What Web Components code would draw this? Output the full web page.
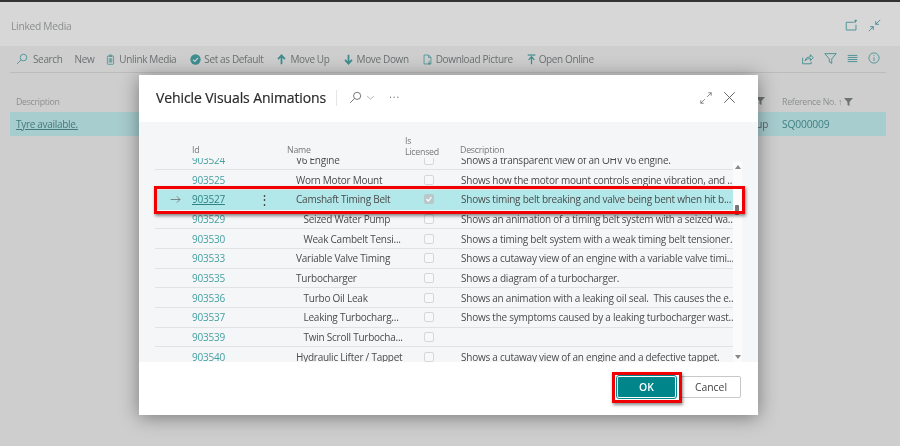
<!DOCTYPE html>
<html lang="en">
<head>
<meta charset="utf-8">
<title>Vehicle Visuals Animations</title>
<style>
  html, body { margin: 0; height: 446px; overflow: hidden; background: #d2d2d2; }
  body { font-family: "Open Sans", "Noto Sans", sans-serif; }
</style>
</head>
<body>
<bc-page>
  <bc-titlebar slot="title" heading="Linked Media"></bc-titlebar>
  <bc-toolbar slot="toolbar"></bc-toolbar>
  <bc-linked-list slot="list"></bc-linked-list>
  <bc-dialog slot="dialog" heading="Vehicle Visuals Animations">
    <bc-animation-table></bc-animation-table>
  </bc-dialog>
</bc-page>

<script>
// Shared stroke icons, 16x16 box
const ICONS = {
  search: '<circle cx="10" cy="6" r="4.4"/><path d="M6.8 9.2 1.5 14.5"/>',
  unlink: '<rect x="3.5" y="3" width="9" height="12" rx="1"/><path d="M6 1.5h4v2H6zM6.2 6v6.5M8 6v6.5M9.8 6v6.5"/>',
  moveup: '<path d="M8 15V3M3 7.5 8 2l5 5.5" stroke-width="2.6"/>',
  movedown: '<path d="M8 1v12M3 8.5 8 14l5-5.5" stroke-width="2.6"/>',
  download: '<path d="M3 1.5h6.5L13 5v9.5H3zM9.5 1.5V5H13"/><path d="M10.5 10v5M8.8 13l1.7 2 1.7-2" stroke-width="1.1"/>',
  open: '<path d="M2.5 1.5h11" stroke-width="1.8"/><path d="M8 15V5M3.8 8.5 8 4l4.2 4.5" stroke-width="1.8"/>',
  share: '<path d="M2 7v7.5h10.5V12"/><path d="M5 11c.5-3.5 3-5 6.5-5V3.2L15 7l-3.500 3.700V8C8.500 8 6.500 9 5 11z"/>',
  filter: '<path d="M1 2h14L9.500 8.500V14l-3-1.800V8.500z"/>',
  list: '<path d="M1 3.500h14M1 6.500h14M1 9.500h14M1 12.500h14" stroke-width="1.300"/>',
  info: '<circle cx="8" cy="8" r="6.800"/><path d="M8 7v5M8 4.200v1.300"/>',
  popout: '<path d="M11 4H1.500v9.500h12V7"/><path d="M12.500 1v3.500M14.500 1.500l-2 2" stroke-width="1.300"/>',
  collapse: '<path d="M15 1 9.500 6.500M9.500 2.500v4h4" stroke-width="1.100"/><path d="M1 15l5.500-5.500M6.500 13.500v-4h-4" stroke-width="1.100"/>',
  expand: '<path d="M9.500 6.500 15 1M11 1h4v4M6.500 9.500 1 15M1 11v4h4" stroke-width="1"/>',
  close: '<path d="M1.500 1.500l13 13M14.500 1.500l-13 13"/>',
  arrow: '<path d="M1 8h13.500M10 3.500 14.500 8 10 12.500"/>',
  chevron: '<path d="M2 5.500 8 11l6-5.500"/>'
};

function icon(name, size, color) {
  return `<svg width="${size}" height="${size}" viewBox="0 0 16 16" fill="none" stroke="${color}" stroke-width="1.100">${ICONS[name]}</svg>`;
}

// Page frame: the dimmed list page with the dialog on top of it
class BcPage extends HTMLElement {
  constructor() {
    super();
    this.attachShadow({ mode: "open" });
    this.shadowRoot.innerHTML = `
    <style>
      :host {
        display: flex;
        flex-direction: column;
        position: relative;
        width: 900px;
        height: 446px;
        background: #cecece;
        border-top: 2px solid #333;
        box-sizing: border-box;
        filter: blur(.3px);
      }
      .dialog { position: absolute; left: 139px; top: 73px; }
    </style>
    <slot name="title"></slot>
    <slot name="toolbar"></slot>
    <slot name="list"></slot>
    <div class="dialog"><slot name="dialog"></slot></div>
    `;
  }
}

class BcTitlebar extends HTMLElement {
  constructor() {
    super();
    this.attachShadow({ mode: "open" });
    this.shadowRoot.innerHTML = `
    <style>
      :host {
        display: flex;
        align-items: center;
        justify-content: space-between;
        height: 44px;
        padding: 3px 19px 0 11px;
        box-sizing: border-box;
        background: #d7d7d7;
        color: #8a8d8e;
        font-size: 10.200px;
        letter-spacing: -.25px;
      }
      .icons { display: flex; gap: 10px; margin-top: -1px; }
    </style>
    <span>${this.getAttribute("heading")}</span>
    <span class="icons">${icon("popout", 13, "#3f8e90")}${icon("collapse", 13, "#3f8e90")}</span>
    `;
  }
}

class BcToolbar extends HTMLElement {
  constructor() {
    super();
    const actions = [
      ["search", "Search", 12, 5, 12],
      [null, "New", 0, 0, 11],
      ["unlink", "Unlink Media", 11, 3, 14],
      ["check", "Set as Default", 11, 3, 13],
      ["moveup", "Move Up", 11, 3, 13],
      ["movedown", "Move Down", 11, 3, 13],
      ["download", "Download Picture", 11, 3, 13],
      ["open", "Open Online", 11, 2, 0]
    ];
    const items = actions.map(([name, label, size, gap, after]) => {
      let glyph = "";
      if (name === "check") {
        glyph = `<svg width="11" height="11" viewBox="0 0 16 16"><circle cx="8" cy="8" r="7.500" fill="#3f8e90"/><path d="M4.500 8.200 7 10.700l4.500-5" fill="none" stroke="#d2d2d2" stroke-width="1.800"/></svg>`;
      } else if (name) {
        glyph = icon(name, size, "#3f8e90");
      }
      return `<span class="item" style="gap:${gap}px;margin-right:${after}px">${glyph}<span>${label}</span></span>`;
    }).join("");
    this.attachShadow({ mode: "open" });
    this.shadowRoot.innerHTML = `
    <style>
      :host {
        display: flex;
        align-items: center;
        justify-content: space-between;
        height: 26px;
        margin: 0 14px 0 10px;
        padding: 0 6px;
        border-bottom: 1px solid #bcbcbc;
        color: #6c7071;
        font-size: 10px;
        letter-spacing: -.36px;
      }
      .left, .right, .item { display: flex; align-items: center; }
      .right { gap: 10px; margin-bottom: 2px; }
      svg { display: block; }
    </style>
    <div class="left">${items}</div>
    <div class="right">${icon("share", 13, "#3f8e90")}${icon("filter", 13, "#3f8e90")}${icon("list", 11, "#3f8e90")}${icon("info", 12, "#3f8e90")}</div>
    `;
  }
}

class BcLinkedList extends HTMLElement {
  constructor() {
    super();
    const funnel = `<svg width="9" height="8" viewBox="0 0 9 8"><path d="M0 0h9L5.500 4v4l-2-1V4z" fill="#6f7374"/></svg>`;
    this.attachShadow({ mode: "open" });
    this.shadowRoot.innerHTML = `
    <style>
      :host {
        display: block;
        margin: 19px 14px 0 10px;
        font-size: 10px;
        letter-spacing: -.3px;
        color: #6c7071;
      }
      .row {
        display: grid;
        grid-template-columns: 1fr 110px 118px;
        align-items: center;
      }
      .head { height: 20px; font-size: 8.800px; color: #8c8f90; }
      .body { height: 24px; background: #a8cdcf; color: #5c6566; }
      .row > :first-child { padding-left: 6px; }
      .end { text-align: right; }
      .head .end { padding-right: 3px; }
      .ref { padding-left: 14px; display: flex; align-items: center; gap: 2px; }
      a { color: #44797c; text-decoration: underline; }
      .num { color: #3f7f82; padding-left: 14px; font-size: 10.300px; letter-spacing: -.2px; }
    </style>
    <div class="row head"><span>Description</span><span class="end">${funnel}</span><span class="ref">Reference No. <span>&#8593;</span> ${funnel}</span></div>
    <div class="row body"><a>Tyre available.</a><span class="end">up</span><span class="num">SQ000009</span></div>
    `;
  }
}

class BcDialog extends HTMLElement {
  constructor() {
    super();
    this.attachShadow({ mode: "open" });
    this.shadowRoot.innerHTML = `
    <style>
      :host {
        display: flex;
        flex-direction: column;
        position: relative;
        width: 619px;
        height: 340px;
        background: #fff;
        box-shadow: 0 2px 18px rgba(0, 0, 0, .42);
        color: #333;
      }
      header {
        display: flex;
        align-items: center;
        height: 47px;
        padding: 0 22px 2px 17px;
        box-sizing: border-box;
      }
      h1 { margin: 0; font-size: 14px; font-weight: 400; letter-spacing: -.1px; color: #2b2b2b; -webkit-text-stroke: .2px #2b2b2b; }
      .sep { width: 1px; height: 16px; background: #e6e6e6; margin: 0 12px 0 10px; }
      .tools { display: flex; align-items: center; flex: 1; color: #777; }
      .dots { margin-left: 14px; letter-spacing: 1px; font-size: 10px; line-height: 10px; margin-top: -8px; }
      .win { display: flex; gap: 11px; align-items: center; }
      .body { flex: 1; background: #f5f6f8; min-height: 0; }
      footer {
        display: flex;
        justify-content: flex-end;
        gap: 5px;
        height: 53px;
        padding: 14px 17px 0 0;
        box-sizing: border-box;
      }
      button {
        width: 60px;
        height: 22px;
        padding: 0;
        font: inherit;
        font-size: 10.400px;
        border-radius: 2px;
      }
      .ok { background: #00858a; border: 1px solid #fff; outline: 1px solid #00858a; color: #fff; font-weight: 600; width: 59px; }
      .cancel { background: #fff; border: 1px solid #c8c8c8; color: #444; }
      /* the red call-out around the OK button, drawn on top of the footer */
      .callout {
        position: absolute;
        left: 473px;
        top: 297px;
        width: 64px;
        height: 25px;
        border: 3px solid #f00000;
        box-shadow: 1px 2px 3px rgba(0, 0, 0, .45);
        pointer-events: none;
      }
    </style>
    <header>
      <h1>${this.getAttribute("heading")}</h1>
      <span class="sep"></span>
      <span class="tools">${icon("search", 13, "#666")}<span style="width:4px"></span>${icon("chevron", 9, "#888")}<span class="dots">...</span></span>
      <span class="win">${icon("expand", 12, "#666")}${icon("close", 13, "#555")}</span>
    </header>
    <div class="body"><slot></slot></div>
    <footer><button class="ok">OK</button><button class="cancel">Cancel</button></footer>
    <div class="callout"></div>
    `;
  }
}

class BcAnimationTable extends HTMLElement {
  constructor() {
    super();
    const data = [
      ["903524", "V6 Engine", 0, "Shows a transparent view of an OHV V6 engine."],
      ["903525", "Worn Motor Mount", 0, "Shows how the motor mount controls engine vibration, and ..."],
      ["903527", "Camshaft Timing Belt", 0, "Shows timing belt breaking and valve being bent when hit b..."],
      ["903529", "Seized Water Pump", 1, "Shows an animation of a timing belt system with a seized wa..."],
      ["903530", "Weak Cambelt Tensi...", 1, "Shows a timing belt system with a weak timing belt tensioner."],
      ["903533", "Variable Valve Timing", 0, "Shows a cutaway view of an engine with a variable valve timi..."],
      ["903535", "Turbocharger", 0, "Shows a diagram of a turbocharger."],
      ["903536", "Turbo Oil Leak", 1, "Shows an animation with a leaking oil seal.&nbsp; This causes the e..."],
      ["903537", "Leaking Turbocharg...", 1, "Shows the symptoms caused by a leaking turbocharger wast..."],
      ["903539", "Twin Scroll Turbocha...", 1, ""],
      ["903540", "Hydraulic Lifter / Tappet", 0, "Shows a cutaway view of an engine and a defective tappet."]
    ];
    const rows = data.map(([id, name, indent, desc]) => {
      const selected = id === "903527";
      return `
      <div class="row${selected ? " selected" : ""}">
        <span class="arrow">${selected ? icon("arrow", 11, "#666") : ""}</span>
        <a>${id}</a>
        <span class="menu">${selected ? "&#8942;" : ""}</span>
        <span></span>
        <span class="${indent ? "indent" : ""}">${name}</span>
        <span class="box">${selected ? '<svg width="8" height="8" viewBox="0 0 8 8"><path d="M1.500 4 3.300 6 6.500 2" fill="none" stroke="#fff" stroke-width="1.200"/></svg>' : ""}</span>
        <span class="desc">${desc}</span>
      </div>`;
    }).join("");
    this.attachShadow({ mode: "open" });
    this.shadowRoot.innerHTML = `
    <style>
      :host {
        display: block;
        position: relative;
        height: 240px;
        font-size: 10px;
        letter-spacing: -.24px;
        color: #4b4b4b;
      }
      .cols, .row {
        display: grid;
        grid-template-columns: 37px 64px 16px 24px 128px 37px 1fr;
        align-items: center;
      }
      .head {
        height: 36px;
        margin-left: 16px;
        width: 578px;
        align-items: end;
        font-size: 8.800px;
        line-height: 11px;
        color: #777;
      }
      .head span { grid-row: 1; margin-bottom: 2px; }
      .head .l { grid-column: 5; margin-left: -9px; }
      .head .n { grid-column: 2; }
      .head .c { grid-column: 5; margin-left: 109px; margin-bottom: 0; white-space: nowrap; }
      .head .d { grid-column: 7; margin-left: -1px; }
      .scroller {
        position: relative;
        height: 204px;
        margin-left: 16px;
        width: 587px;
        overflow: hidden;
      }
      .rows { width: 578px; margin-top: -7.400px; }
      .row {
        height: 19.700px;
        box-sizing: border-box;
        border-bottom: 1px solid #e1e2e4;
        white-space: nowrap;
      }
      .row a { color: #45a0a1; }
      .row.selected { background: #b2e8ea; border-bottom-color: #b2e8ea; }
      .row.selected a { text-decoration: underline; color: #2f8385; }
      .arrow { display: flex; justify-content: center; padding-left: 4px; }
      .menu { text-align: center; font-size: 13px; line-height: 12px; }
      .indent { padding-left: 7.500px; }
      .box {
        display: flex;
        align-items: center;
        justify-content: center;
        width: 8px;
        height: 8px;
        border: 1px solid #d6d7d9;
        border-radius: 2px;
        background: #f7f8f9;
      }
      .selected .box { background: #b9c9ca; border-color: #b9c9ca; }
      .desc { overflow: hidden; }
      .bar {
        position: absolute;
        left: 578px;
        top: 4px;
        bottom: 0;
        width: 9px;
        background: #fbfbfc;
      }
      .bar i { position: absolute; left: 2px; }
      .up { top: 3px; border: 3px solid transparent; border-top: 0; border-bottom: 4px solid #888; left: 1.500px !important; }
      .down { bottom: 3px; border: 3px solid transparent; border-bottom: 0; border-top: 4px solid #888; left: 1.500px !important; }
      .thumb { top: 43px; width: 4px; height: 10px; background: #777; border-radius: 1px; }
      /* the red call-out around the selected row */
      .callout {
        position: absolute;
        left: -1px;
        top: 64px;
        width: 585px;
        height: 22px;
        border: 3px solid #f00000;
        box-shadow: 1px 2px 3px rgba(0, 0, 0, .45);
        pointer-events: none;
      }
      .wrap { position: absolute; left: 0; top: 0; width: 100%; height: 100%; pointer-events: none; }
    </style>
    <div class="cols head">
      <span class="n">Id</span>
      <span class="l">Name</span>
      <span class="c">Is<br>Licensed</span>
      <span class="d">Description</span>
    </div>
    <div class="scroller">
      <div class="rows">${rows}</div>
      <div class="bar"><i class="up"></i><i class="thumb"></i><i class="down"></i></div>
    </div>
    <div class="wrap" style="left:16px"><div class="callout"></div></div>
    `;
  }
}

customElements.define("bc-page", BcPage);
customElements.define("bc-titlebar", BcTitlebar);
customElements.define("bc-toolbar", BcToolbar);
customElements.define("bc-linked-list", BcLinkedList);
customElements.define("bc-dialog", BcDialog);
customElements.define("bc-animation-table", BcAnimationTable);
</script>
</body>
</html>
